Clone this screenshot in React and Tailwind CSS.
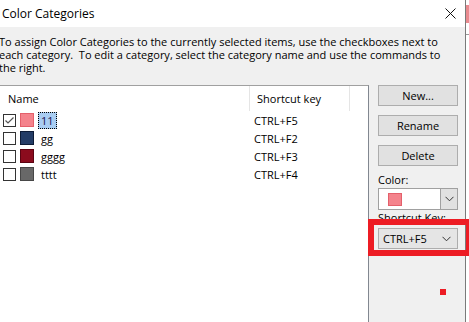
import React from "react";

const categories = [
  { name: "11", key: "CTRL+F5", fill: "#f4838c", edge: "#e4606b", checked: true, selected: true },
  { name: "gg", key: "CTRL+F2", fill: "#233c66", edge: "#0d1b36" },
  { name: "gggg", key: "CTRL+F3", fill: "#8b0b1d", edge: "#5c0312" },
  { name: "tttt", key: "CTRL+F4", fill: "#686868", edge: "#474747" },
];

const Chevron = () => (
  <svg width="9" height="6" viewBox="0 0 9 6">
    <path d="M0.5 0.8 L4.5 4.8 L8.5 0.8" fill="none" stroke="#333" strokeWidth="1" />
  </svg>
);

function Row({ item }) {
  return (
    <div className="flex h-[18px] items-center">
      <div className="flex w-[250px] items-center">
        <div className="ml-[3px] flex h-[13px] w-[13px] items-center justify-center border border-[#333] bg-white">
          {item.checked && (
            <svg width="11" height="11" viewBox="0 0 11 11">
              <path d="M1.5 5.5 L4 8 L9.5 2.5" fill="none" stroke="#555" strokeWidth="1.2" />
            </svg>
          )}
        </div>
        <div
          className="ml-[4px] h-[14px] w-[14px] border"
          style={{ backgroundColor: item.fill, borderColor: item.edge }}
        />
        {item.selected ? (
          <span className="ml-[4px] flex h-[17px] items-center border border-dotted border-black bg-[#a9cdf2] px-[2px] text-[#1c0f4d]">
            {item.name}
          </span>
        ) : (
          <span className="ml-[7px] text-black">{item.name}</span>
        )}
      </div>
      <div className="pl-[4px] text-black">{item.key}</div>
    </div>
  );
}

function App() {
  return (
    <div
      className="relative h-[322px] w-[469px] overflow-hidden bg-white text-[11px] leading-[13px] text-black"
      style={{ fontFamily: '"Open Sans", sans-serif' }}
    >
      <div className="flex h-full">
        <div className="flex w-[465px] flex-col bg-[#f0f0f0]">
          <div className="flex h-[27px] items-center justify-between bg-white pl-[2px] pr-[9px]">
            <span className="text-[12px]">Color Categories</span>
            <svg width="11" height="11" viewBox="0 0 11 11">
              <path d="M0.5 0.5 L10.5 10.5 M10.5 0.5 L0.5 10.5" stroke="#111" strokeWidth="1" />
            </svg>
          </div>

          <p className="-ml-px mt-[8px] pr-[20px]">
            To assign Color Categories to the currently selected items, use the checkboxes next to each
            category.&nbsp; To edit a category, select the category name and use the commands to the right.
          </p>

          <div className="mt-[11px] flex flex-1">
            <div className="-ml-px w-[370px] border border-r-[#828790] border-t-[#a0a0a0] border-l-[#828790] border-b-0 bg-white">
              <div className="flex h-[25px] items-center">
                <div className="flex h-full w-[250px] items-center border-r border-[#e5e5e5] pl-[8px]">Name</div>
                <div className="flex h-full w-[100px] items-center border-r border-[#e5e5e5] pl-[7px]">Shortcut key</div>
              </div>
              {categories.map((c) => (
                <Row key={c.name} item={c} />
              ))}
            </div>

            <div className="ml-[9px] flex w-[80px] flex-col">
              {["New...", "Rename", "Delete"].map((b) => (
                <button
                  key={b}
                  className="mb-[9px] h-[21px] w-[80px] border border-[#adadad] bg-[#e1e1e1] text-center"
                >
                  {b}
                </button>
              ))}
              <div className="-mt-[2px]">Color:</div>
              <div className="mt-[2px] flex h-[22px] border border-[#a0a0a0] bg-white">
                <div className="flex flex-1 items-center pl-[9px]">
                  <div className="h-[13px] w-[14px] border border-[#e4606b] bg-[#f4838c]" />
                </div>
                <div className="flex w-[17px] items-center justify-center border-l border-[#a0a0a0] bg-[#e1e1e1]">
                  <Chevron />
                </div>
              </div>
              <div className="mt-[1px]">Shortcut Key:</div>
              <div className="mt-[4px] flex h-[21px] items-center justify-between border border-[#adadad] bg-[#e5e5e5] pl-[4px] pr-[6px]">
                <span>CTRL+F5</span>
                <Chevron />
              </div>
            </div>
          </div>
        </div>
        <div className="w-px bg-[#7a7a7a]" />
        <div className="flex flex-1 flex-col bg-white">
          <div className="mt-[5px] h-[18px] bg-[#e98a8f]" />
          <div className="mt-[11px] h-px bg-[#9a9a9a]" />
        </div>
      </div>

      {/* annotation overlays */}
      <div className="absolute left-[368px] top-[219px] h-[37px] w-[104px] border-[6px] border-[#ed1c24]" />
      <div className="absolute left-[440px] top-[289px] h-[6px] w-[6px] bg-[#ed1c24]" />
    </div>
  );
}

export default App;
